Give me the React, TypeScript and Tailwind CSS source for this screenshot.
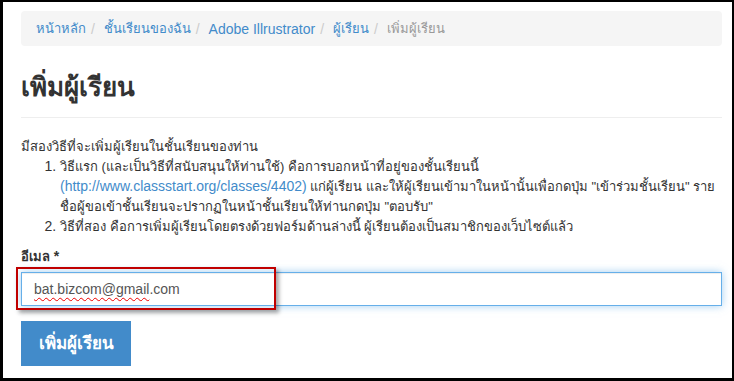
export default function App() {
  const crumbs = [
    { label: 'หน้าหลัก', thai: true },
    { label: 'ชั้นเรียนของฉัน', thai: true },
    { label: 'Adobe Illrustrator', thai: false },
    { label: 'ผู้เรียน', thai: true },
  ];

  return (
    <div className="w-[734px] h-[381px] overflow-hidden bg-black pt-[2px] pl-[3px] pr-[2px] pb-[3px]">
      <div className="h-full bg-white pt-[9px] pl-[18px] pr-[10px] text-[13px] text-[#333] font-['Liberation_Sans','Noto_Sans',sans-serif]">
        {/* Breadcrumb */}
        <div className="flex h-[35px] items-center rounded-[4px] bg-[#f5f5f5] px-[15px] leading-[20px]">
          {crumbs.map((c) => (
            <span key={c.label} className="flex items-center">
              <span className={c.thai ? 'text-[#428bca]' : 'text-[14px] text-[#428bca]'}>{c.label}</span>
              <span className="px-[5px] text-[14px] text-[#ccc]">/&nbsp;</span>
            </span>
          ))}
          <span className="text-[#999]">เพิ่มผู้เรียน</span>
        </div>

        {/* Page header */}
        <div className="border-b border-[#eee] pt-[24px] pb-[13px]">
          <h1 className="text-[26px] font-bold leading-[34px] text-[#333]">เพิ่มผู้เรียน</h1>
        </div>

        {/* Instructions */}
        <div className="mt-[19px] leading-[20px]">
          <p>มีสองวิธีที่จะเพิ่มผู้เรียนในชั้นเรียนของท่าน</p>
          <ol className="mb-[10px] list-decimal pl-[39px] whitespace-nowrap marker:text-[14px] marker:leading-none">
            <li>
              วิธีแรก (และเป็นวิธีที่สนับสนุนให้ท่านใช้) คือการบอกหน้าที่อยู่ของชั้นเรียนนี้
              <br />
              <span className="text-[14px] leading-none text-[#428bca]">(http://www.classstart.org/classes/4402)</span> แก่ผู้เรียน
              และให้ผู้เรียนเข้ามาในหน้านั้นเพื่อกดปุ่ม "เข้าร่วมชั้นเรียน" ราย
              <br />
              ชื่อผู้ขอเข้าชั้นเรียนจะปรากฏในหน้าชั้นเรียนให้ท่านกดปุ่ม "ตอบรับ"
            </li>
            <li>วิธีที่สอง คือการเพิ่มผู้เรียนโดยตรงด้วยฟอร์มด้านล่างนี้ ผู้เรียนต้องเป็นสมาชิกของเว็บไซต์แล้ว</li>
          </ol>
        </div>

        {/* Form */}
        <div className="h-[20px] leading-[20px] font-bold">
          อีเมล <span className="text-[14px] leading-none">*</span>
        </div>
        <div className="relative mt-[5px]">
          <div className="flex h-[34px] items-center border border-[#66afe9] px-[12px] text-[14px] text-[#555] shadow-[inset_0_1px_1px_rgba(0,0,0,0.075),0_0_8px_rgba(102,175,233,0.6)]">
            <span className="underline decoration-wavy decoration-[#e00] decoration-1 underline-offset-[3px]">
              bat.bizcom@gmail
            </span>
            <span>.com</span>
          </div>
          {/* annotation box */}
          <div className="absolute left-[-5px] top-[-5px] h-[43px] w-[260px] border-2 border-[#c00000] shadow-[3px_3px_4px_rgba(0,0,0,0.35)]" />
        </div>

        <button className="mt-[15px] h-[45px] w-[110px] bg-[#428bca] text-[17px] font-bold text-white">
          เพิ่มผู้เรียน
        </button>
      </div>
    </div>
  );
}
